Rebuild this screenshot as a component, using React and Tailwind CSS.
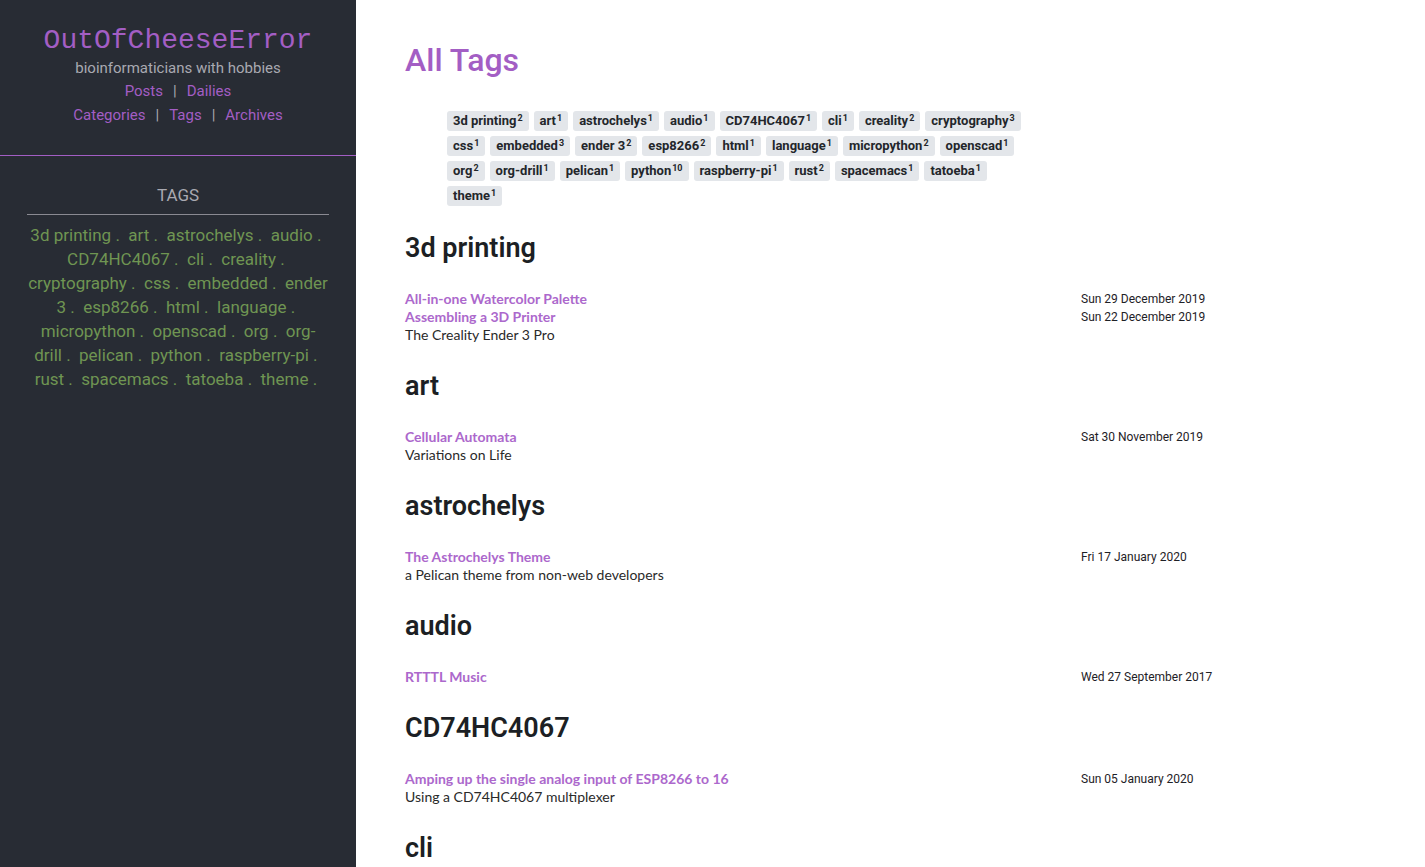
import { Fragment } from 'react'

const sidebarTags = [
  '3d printing', 'art', 'astrochelys', 'audio', 'CD74HC4067', 'cli', 'creality',
  'cryptography', 'css', 'embedded', 'ender 3', 'esp8266', 'html', 'language',
  'micropython', 'openscad', 'org', 'org-drill', 'pelican', 'python', 'raspberry-pi',
  'rust', 'spacemacs', 'tatoeba', 'theme',
]

// rows as they wrap in the tag cloud
const tagRows = [
  [['3d printing', 2], ['art', 1], ['astrochelys', 1], ['audio', 1], ['CD74HC4067', 1], ['cli', 1], ['creality', 2], ['cryptography', 3]],
  [['css', 1], ['embedded', 3], ['ender 3', 2], ['esp8266', 2], ['html', 1], ['language', 1], ['micropython', 2], ['openscad', 1]],
  [['org', 2], ['org-drill', 1], ['pelican', 1], ['python', 10], ['raspberry-pi', 1], ['rust', 2], ['spacemacs', 1], ['tatoeba', 1]],
  [['theme', 1]],
]

const sections = [
  {
    name: '3d printing',
    articles: [
      { title: 'All-in-one Watercolor Palette', date: 'Sun 29 December 2019' },
      { title: 'Assembling a 3D Printer', summary: 'The Creality Ender 3 Pro', date: 'Sun 22 December 2019' },
    ],
  },
  {
    name: 'art',
    articles: [{ title: 'Cellular Automata', summary: 'Variations on Life', date: 'Sat 30 November 2019' }],
  },
  {
    name: 'astrochelys',
    articles: [{ title: 'The Astrochelys Theme', summary: 'a Pelican theme from non-web developers', date: 'Fri 17 January 2020' }],
  },
  {
    name: 'audio',
    articles: [{ title: 'RTTTL Music', date: 'Wed 27 September 2017' }],
  },
  {
    name: 'CD74HC4067',
    articles: [{ title: 'Amping up the single analog input of ESP8266 to 16', summary: 'Using a CD74HC4067 multiplexer', date: 'Sun 05 January 2020' }],
  },
  { name: 'cli', articles: [] },
]

const cond = { fontFamily: 'Roboto, "Noto Sans", sans-serif' }

function Sidebar() {
  return (
    <aside className="w-[356px] shrink-0 bg-[#282c34] min-h-screen">
      <div className="pt-[25px] pb-[28px] text-center border-b border-[#a35ec4]" style={cond}>
        <div className="text-[28px] leading-[32px] text-[#a35ec4]" style={{ fontFamily: '"Liberation Mono", monospace' }}>
          OutOfCheeseError
        </div>
        <div className="text-[15px] leading-[22px] text-[#a9a9b1]">bioinformaticians with hobbies</div>
        <div className="text-[15px] leading-[24px] text-[#a35ec4]">
          <a href="#">Posts</a>
          <span className="text-[#a9a9b1] mx-[10px]">|</span>
          <a href="#">Dailies</a>
        </div>
        <div className="text-[15px] leading-[24px] text-[#a35ec4]">
          <a href="#">Categories</a>
          <span className="text-[#a9a9b1] mx-[10px]">|</span>
          <a href="#">Tags</a>
          <span className="text-[#a9a9b1] mx-[10px]">|</span>
          <a href="#">Archives</a>
        </div>
      </div>
      <div className="px-[27px] pt-[27px]" style={cond}>
        <div className="text-center text-[17px] leading-[24px] text-[#a9a9b1] pb-[7px] border-b border-[#8a8a92]">
          TAGS
        </div>
        <p className="mt-[8px] text-center text-[17px] leading-[24px] text-[#6f9552]">
          {sidebarTags.map((t) => (
            <Fragment key={t}>
              {t}{'\u00a0.\u00a0 '}
            </Fragment>
          ))}
        </p>
      </div>
    </aside>
  )
}

function TagBadge({ name, count }) {
  return (
    <a
      href="#"
      className="inline-flex items-start h-[20px] px-[6px] rounded-[3px] bg-[#e3e6ea] text-[13px] leading-[20px] font-bold text-[#23262b]"
      style={cond}
    >
      {name}
      <sup className="text-[9px] leading-[14px] top-0 ml-[1px]">{count}</sup>
    </a>
  )
}

function Section({ section }) {
  return (
    <section className="mb-[24px]">
      <h2 className="text-[27px] leading-[36px] font-semibold text-[#1c1f24]" style={cond}>
        {section.name}
      </h2>
      {section.articles.length > 0 && (
        <div className="mt-[24px]">
          {section.articles.map((a) => (
            <div key={a.title} className="grid grid-cols-[676px_1fr]">
              <div className="text-[14px] leading-[18px]" style={{ fontFamily: 'Lato, sans-serif' }}>
                <a href="#" className="block font-bold text-[#ac68cc]">{a.title}</a>
                {a.summary && <div className="text-[#2a2a2a]">{a.summary}</div>}
              </div>
              <div className="text-[12px] leading-[18px] text-[#1e2126]" style={cond}>
                {a.date}
              </div>
            </div>
          ))}
        </div>
      )}
    </section>
  )
}

export default function App() {
  return (
    <div className="flex h-[867px] overflow-hidden bg-white">
      <Sidebar />
      <main className="flex-1 pl-[49px] pt-[40px]">
        <h1 className="text-[32px] leading-[40px] font-medium text-[#a35ec4]" style={cond}>
          All Tags
        </h1>
        <div className="mt-[31px] ml-[42px] mb-[24px] flex flex-col gap-[5px]">
          {tagRows.map((row, i) => (
            <div key={i} className="flex gap-[5px]">
              {row.map(([n, c]) => (
                <TagBadge key={n} name={n} count={c} />
              ))}
            </div>
          ))}
        </div>
        {sections.map((s) => (
          <Section key={s.name} section={s} />
        ))}
      </main>
    </div>
  )
}
